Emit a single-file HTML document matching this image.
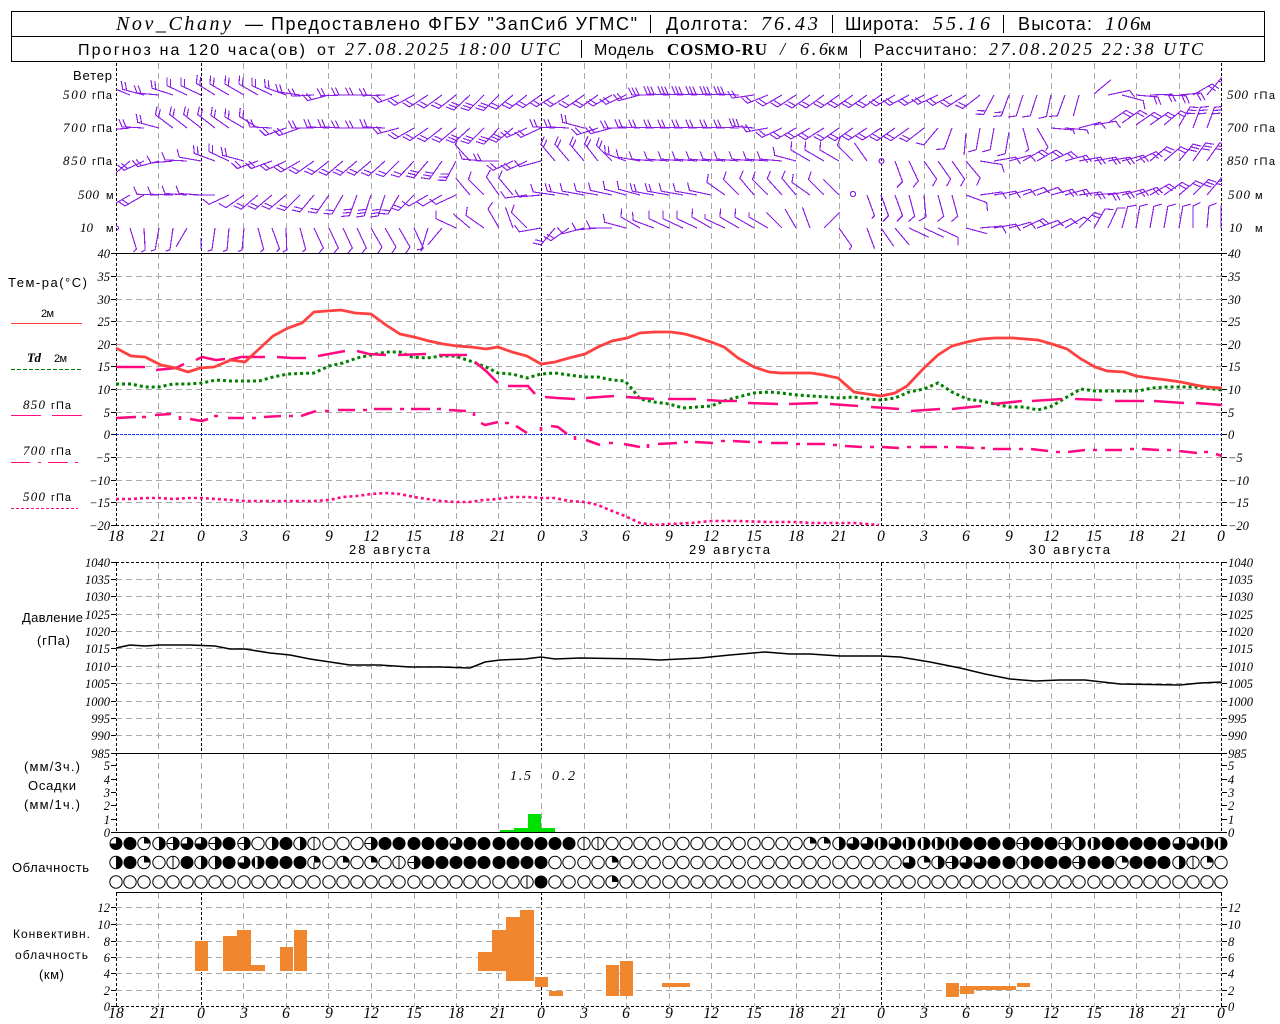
<!DOCTYPE html>
<html lang="ru"><head><meta charset="utf-8"><title>Nov_Chany</title>
<style>
html,body{margin:0;padding:0;background:#fff}
svg{display:block}
text{font-family:"Liberation Sans",sans-serif;font-size:13px;fill:#000}
.i{font-family:"Liberation Serif",serif;font-style:italic;font-size:13px}
.h{font-size:18px}.hi{font-family:"Liberation Serif",serif;font-style:italic;font-size:20px}
.s{font-size:16px}.si{font-family:"Liberation Serif",serif;font-style:italic;font-size:18px}
.tk{font-family:"Liberation Serif",serif;font-style:italic;font-size:12.5px}
.ax{font-family:"Liberation Serif",serif;font-style:italic;font-size:15.5px;text-anchor:middle}
.l{text-anchor:end}
.c{text-anchor:middle}
.g{fill:none;stroke:#a9a9a9;stroke-dasharray:6 4;shape-rendering:crispEdges}
.k{fill:none;stroke:#000;stroke-dasharray:3 2;shape-rendering:crispEdges}
.w{fill:none;stroke:#8a1ee6;stroke-width:1.15;shape-rendering:crispEdges}
.crisp{shape-rendering:crispEdges}
</style></head><body>
<svg xmlns="http://www.w3.org/2000/svg" width="1280" height="1024" viewBox="0 0 1280 1024">
<defs>
<clipPath id="vc"><rect x="0" y="63" width="1280" height="462"/><rect x="0" y="562" width="1280" height="270"/><rect x="0" y="892" width="1280" height="114"/></clipPath>
<clipPath id="wc"><rect x="116" y="63" width="1106" height="190"/></clipPath>
<clipPath id="tc"><rect x="116" y="254" width="1106" height="272"/></clipPath>
<path id="a" d="M0 0H-22"/>
<path id="e" d="M0 0H-22l-2-4"/>
<path id="b" d="M0 0H-22l-3.6-7.5"/>
<path id="c" d="M0 0H-22l-3.6-7.5M-18 0l-3.6-7.5"/>
<path id="d" d="M0 0H-22l-3.6-7.5M-18.5 0l-3.6-7.5M-15 0l-3.6-7.5"/>
<circle id="k0" r="6.2" fill="#fff" stroke="#000"/>
<g id="k1"><circle r="6.2" fill="#fff" stroke="#000"/><path d="M0-6V6" stroke="#000"/></g>
<g id="k2"><circle r="6.2" fill="#fff" stroke="#000"/><path d="M0 0V-6.5A6.5 6.5 0 0 1 6.5 0Z"/></g>
<g id="k3"><circle r="6.2" fill="#fff" stroke="#000"/><path d="M0 0V-6.5A6.5 6.5 0 0 1 6.5 0Z"/><path d="M0 0V6" stroke="#000"/></g>
<g id="k4"><circle r="6.2" fill="#fff" stroke="#000"/><path d="M0-6.5A6.5 6.5 0 0 1 0 6.5Z"/></g>
<g id="k5"><circle r="6.2" fill="#fff" stroke="#000"/><path d="M0-6.5A6.5 6.5 0 0 1 0 6.5Z"/><path d="M-6 0H0" stroke="#000"/></g>
<g id="k6"><circle r="6.5"/><path d="M0 0V-5.5A5.5 5.5 0 0 0-5.5 0Z" fill="#fff"/></g>
<g id="k7"><circle r="6.5"/><rect x="-3" y="-5.4" width="2.6" height="10.8" fill="#fff"/></g>
<circle id="k8" r="6.5"/>
</defs>
<!-- header -->
<rect class="crisp" x="11.5" y="11.5" width="1253" height="50" fill="none" stroke="#000"/>
<path class="crisp" d="M11 36.5H1265M650.5 15V33M832.5 15V33M1003.5 15V33M581.5 40V58M860.5 40V58" stroke="#000"/>
<text class="hi" x="116" y="30" textLength="115">Nov_Chany</text>
<text class="h" x="245" y="30" textLength="13">—</text>
<text class="h" x="271" y="30" textLength="366">Предоставлено ФГБУ "ЗапСиб УГМС"</text>
<text class="h" x="666" y="30" textLength="82">Долгота:</text>
<text class="hi" x="761" y="30" textLength="57">76.43</text>
<text class="h" x="845" y="30" textLength="74">Широта:</text>
<text class="hi" x="933" y="30" textLength="57">55.16</text>
<text class="h" x="1018" y="30" textLength="74">Высота:</text>
<text class="hi" x="1105" y="30" textLength="35">106</text>
<text class="s" x="1140" y="30" textLength="12">м</text>
<text class="s" x="78" y="55" textLength="227">Прогноз на 120 часа(ов)</text>
<text class="s" x="317" y="55" textLength="18">от</text>
<text class="si" x="345" y="55" textLength="215">27.08.2025 18:00 UTC</text>
<text class="s" x="594" y="55" textLength="60">Модель</text>
<text x="667" y="55" textLength="100" style="font-family:'Liberation Serif',serif;font-weight:bold;font-size:17px">COSMO-RU</text>
<text class="si" x="780" y="55" textLength="8">/</text>
<text class="si" x="800" y="55" textLength="28">6.6</text>
<text class="s" x="828" y="55" textLength="20">км</text>
<text class="s" x="874" y="55" textLength="103">Рассчитано:</text>
<text class="si" x="989" y="55" textLength="214">27.08.2025 22:38 UTC</text>
<!-- grids -->
<g clip-path="url(#vc)">
<path class="g" d="M158.5 63V1006M243.5 63V1006M286.5 63V1006M328.5 63V1006M371.5 63V1006M414.5 63V1006M456.5 63V1006M498.5 63V1006M584.5 63V1006M626.5 63V1006M669.5 63V1006M711.5 63V1006M754.5 63V1006M796.5 63V1006M839.5 63V1006M924.5 63V1006M966.5 63V1006M1009.5 63V1006M1051.5 63V1006M1094.5 63V1006M1136.5 63V1006M1179.5 63V1006"/>
<path class="g" d="M201.5 753V832M541.5 753V832M881.5 753V832"/>
<path class="k" d="M116.5 63V1006M1221.5 63V1006M201.5 63V753M541.5 63V753M881.5 63V753M201.5 892V1006M541.5 892V1006M881.5 892V1006"/>
</g>
<path class="g" d="M116 276.5H1222M116 299.5H1222M116 321.5H1222M116 344.5H1222M116 366.5H1222M116 389.5H1222M116 412.5H1222M116 457.5H1222M116 480.5H1222M116 502.5H1222M116 579.5H1222M116 596.5H1222M116 614.5H1222M116 631.5H1222M116 648.5H1222M116 666.5H1222M116 683.5H1222M116 701.5H1222M116 718.5H1222M116 735.5H1222M116 907.5H1222M116 924.5H1222M116 941.5H1222M116 957.5H1222M116 973.5H1222M116 990.5H1222"/>
<path class="crisp" d="M111 253.5H1227M111 753.5H1227M116 832.5H1222M116 892.5H1222" stroke="#000" fill="none"/>
<path class="k" d="M116 525.5H1222M116 562.5H1222M116 1006.5H1222"/>
<path class="crisp" stroke="#000" d="M111 276.5h5M111 299.5h5M111 321.5h5M111 344.5h5M111 366.5h5M111 389.5h5M111 412.5h5M111 434.5h5M111 457.5h5M111 480.5h5M111 502.5h5M111 525.5h5M111 562.5h5M111 579.5h5M111 596.5h5M111 614.5h5M111 631.5h5M111 648.5h5M111 666.5h5M111 683.5h5M111 701.5h5M111 718.5h5M111 735.5h5M111 765.5h5M111 779.5h5M111 792.5h5M111 805.5h5M111 819.5h5M111 832.5h5M111 907.5h5M111 924.5h5M111 941.5h5M111 957.5h5M111 973.5h5M111 990.5h5M111 1006.5h5M1222 276.5h5M1222 299.5h5M1222 321.5h5M1222 344.5h5M1222 366.5h5M1222 389.5h5M1222 412.5h5M1222 434.5h5M1222 457.5h5M1222 480.5h5M1222 502.5h5M1222 525.5h5M1222 562.5h5M1222 579.5h5M1222 596.5h5M1222 614.5h5M1222 631.5h5M1222 648.5h5M1222 666.5h5M1222 683.5h5M1222 701.5h5M1222 718.5h5M1222 735.5h5M1222 765.5h5M1222 779.5h5M1222 792.5h5M1222 805.5h5M1222 819.5h5M1222 832.5h5M1222 907.5h5M1222 924.5h5M1222 941.5h5M1222 957.5h5M1222 973.5h5M1222 990.5h5M1222 1006.5h5"/>
<!-- wind -->
<g class="w" clip-path="url(#wc)">
<g transform="translate(0 95)">
<use href="#c" transform="translate(130)rotate(22)"/><use href="#c" transform="translate(144)rotate(15)"/><use href="#c" transform="translate(159)rotate(5)"/><use href="#c" transform="translate(173)rotate(18)"/><use href="#c" transform="translate(187)rotate(25)"/><use href="#c" transform="translate(201)rotate(25)"/><use href="#c" transform="translate(215)rotate(32)"/><use href="#c" transform="translate(229)rotate(30)"/><use href="#c" transform="translate(244)rotate(30)"/><use href="#c" transform="translate(258)rotate(30)"/><use href="#c" transform="translate(272)rotate(25)"/><use href="#c" transform="translate(286)rotate(20)"/><use href="#c" transform="translate(300)rotate(8)"/><use href="#c" transform="translate(314)rotate(-3)"/><use href="#c" transform="translate(329)rotate(-15)"/><use href="#c" transform="translate(343)rotate(-2)"/><use href="#c" transform="translate(357)"/><use href="#c" transform="translate(371)"/><use href="#c" transform="translate(385)rotate(-2)"/><use href="#c" transform="translate(399)rotate(-20)"/><use href="#c" transform="translate(414)rotate(-28)"/><use href="#c" transform="translate(428)rotate(-33)"/><use href="#c" transform="translate(442)rotate(-36)"/><use href="#c" transform="translate(456)rotate(-38)"/><use href="#d" transform="translate(470)rotate(-43)"/><use href="#d" transform="translate(484)rotate(-45)"/><use href="#d" transform="translate(499)rotate(-45)"/><use href="#c" transform="translate(513)rotate(-40)"/><use href="#c" transform="translate(527)rotate(-38)"/><use href="#c" transform="translate(541)rotate(-35)"/><use href="#c" transform="translate(555)rotate(-32)"/><use href="#c" transform="translate(569)rotate(-32)"/><use href="#c" transform="translate(584)rotate(-35)"/><use href="#c" transform="translate(598)rotate(-35)"/><use href="#c" transform="translate(612)rotate(-30)"/><use href="#c" transform="translate(626)rotate(-25)"/><use href="#c" transform="translate(640)rotate(-15)"/><use href="#d" transform="translate(654)"/><use href="#d" transform="translate(669)rotate(3)"/><use href="#d" transform="translate(683)rotate(3)"/><use href="#d" transform="translate(697)rotate(3)"/><use href="#d" transform="translate(711)rotate(3)"/><use href="#d" transform="translate(725)rotate(3)"/><use href="#d" transform="translate(739)rotate(3)"/><use href="#c" transform="translate(754)rotate(-8)"/><use href="#c" transform="translate(768)rotate(-22)"/><use href="#c" transform="translate(782)rotate(-30)"/><use href="#c" transform="translate(796)rotate(-33)"/><use href="#c" transform="translate(810)rotate(-36)"/><use href="#c" transform="translate(824)rotate(-36)"/><use href="#c" transform="translate(839)rotate(-35)"/><use href="#c" transform="translate(853)rotate(-35)"/><use href="#c" transform="translate(867)rotate(-35)"/><use href="#c" transform="translate(881)rotate(-35)"/><use href="#c" transform="translate(895)rotate(-30)"/><use href="#c" transform="translate(909)rotate(-28)"/><use href="#c" transform="translate(924)rotate(-28)"/><use href="#c" transform="translate(938)rotate(-25)"/><use href="#c" transform="translate(952)rotate(-28)"/><use href="#c" transform="translate(966)rotate(-32)"/><use href="#c" transform="translate(980)rotate(-38)"/><use href="#c" transform="translate(994)rotate(-62)"/><use href="#c" transform="translate(1009)rotate(-70)"/><use href="#b" transform="translate(1023)rotate(-72)"/><use href="#b" transform="translate(1037)rotate(-72)"/><use href="#b" transform="translate(1051)rotate(-78)"/><use href="#b" transform="translate(1065)rotate(-70)"/><use href="#a" transform="translate(1079)rotate(-75)"/><use href="#a" transform="translate(1094 -1)rotate(140)"/><use href="#b" transform="translate(1108)rotate(168)"/><use href="#b" transform="translate(1122)rotate(-165)"/><use href="#c" transform="translate(1136)rotate(-175)"/><use href="#c" transform="translate(1150)rotate(178)"/><use href="#c" transform="translate(1164)rotate(-178)"/><use href="#c" transform="translate(1179)rotate(175)"/><use href="#c" transform="translate(1193)rotate(150)"/><use href="#c" transform="translate(1207)rotate(130)"/>
</g>
<g transform="translate(0 128)">
<use href="#a" transform="translate(130)rotate(-5)"/><use href="#c" transform="translate(144)rotate(3)"/><use href="#c" transform="translate(159)rotate(15)"/><use href="#c" transform="translate(173)rotate(37)"/><use href="#c" transform="translate(187)rotate(38)"/><use href="#c" transform="translate(201)rotate(38)"/><use href="#c" transform="translate(215)rotate(38)"/><use href="#c" transform="translate(229)rotate(35)"/><use href="#c" transform="translate(244)rotate(30)"/><use href="#c" transform="translate(258)rotate(32)"/><use href="#c" transform="translate(272)rotate(3)"/><use href="#c" transform="translate(286)rotate(-20)"/><use href="#c" transform="translate(300)rotate(-20)"/><use href="#c" transform="translate(314)"/><use href="#c" transform="translate(329)rotate(3)"/><use href="#c" transform="translate(343)rotate(3)"/><use href="#c" transform="translate(357)"/><use href="#c" transform="translate(371)"/><use href="#c" transform="translate(385)rotate(3)"/><use href="#c" transform="translate(399)rotate(-15)"/><use href="#c" transform="translate(414)rotate(-30)"/><use href="#c" transform="translate(428)rotate(-35)"/><use href="#c" transform="translate(442)rotate(-38)"/><use href="#c" transform="translate(456)rotate(-40)"/><use href="#d" transform="translate(470)rotate(-42)"/><use href="#d" transform="translate(484)rotate(-45)"/><use href="#d" transform="translate(499)rotate(-47)"/><use href="#d" transform="translate(513)rotate(-40)"/><use href="#c" transform="translate(527)rotate(-25)"/><use href="#c" transform="translate(541)rotate(-25)"/><use href="#c" transform="translate(555)rotate(3)"/><use href="#c" transform="translate(569)rotate(3)"/><use href="#c" transform="translate(584)rotate(15)"/><use href="#c" transform="translate(598)rotate(-18)"/><use href="#c" transform="translate(612)rotate(-15)"/><use href="#c" transform="translate(626)"/><use href="#c" transform="translate(640)rotate(3)"/><use href="#c" transform="translate(654)rotate(2)"/><use href="#c" transform="translate(669)rotate(2)"/><use href="#c" transform="translate(683)rotate(2)"/><use href="#c" transform="translate(697)rotate(2)"/><use href="#c" transform="translate(711)rotate(2)"/><use href="#c" transform="translate(725)rotate(2)"/><use href="#c" transform="translate(739)rotate(2)"/><use href="#d" transform="translate(754)rotate(5)"/><use href="#c" transform="translate(768)rotate(-10)"/><use href="#c" transform="translate(782)rotate(-25)"/><use href="#c" transform="translate(796)rotate(-30)"/><use href="#c" transform="translate(810)rotate(-30)"/><use href="#c" transform="translate(824)rotate(-32)"/><use href="#c" transform="translate(839)rotate(-35)"/><use href="#c" transform="translate(853)rotate(-35)"/><use href="#c" transform="translate(867)rotate(-33)"/><use href="#c" transform="translate(881)rotate(-33)"/><use href="#c" transform="translate(895)rotate(-35)"/><use href="#c" transform="translate(909)rotate(-35)"/><use href="#c" transform="translate(924)rotate(-38)"/><use href="#b" transform="translate(938)rotate(-50)"/><use href="#b" transform="translate(952)rotate(-70)"/><use href="#a" transform="translate(966 5)rotate(-85)"/><use href="#b" transform="translate(980)rotate(-80)"/><use href="#b" transform="translate(994)rotate(-80)"/><use href="#b" transform="translate(1009 4)rotate(-80)"/><use href="#e" transform="translate(1023)rotate(-105)"/><use href="#e" transform="translate(1037)rotate(-120)"/><use href="#e" transform="translate(1051)rotate(-175)"/><use href="#e" transform="translate(1065)rotate(-175)"/><use href="#b" transform="translate(1079)rotate(165)"/><use href="#b" transform="translate(1094 -3)rotate(170)"/><use href="#c" transform="translate(1108 -5)rotate(145)"/><use href="#c" transform="translate(1122 -5)rotate(145)"/><use href="#c" transform="translate(1136 -3)rotate(145)"/><use href="#c" transform="translate(1150 -3)rotate(145)"/><use href="#c" transform="translate(1164 -3)rotate(140)"/><use href="#d" transform="translate(1179 -2)rotate(120)"/><use href="#d" transform="translate(1193)rotate(110)"/><use href="#d" transform="translate(1207)rotate(110)"/>
</g>
<g transform="translate(0 161)">
<use href="#c" transform="translate(130)rotate(-40)"/><use href="#c" transform="translate(144)rotate(-25)"/><use href="#c" transform="translate(159)rotate(-15)"/><use href="#b" transform="translate(173)rotate(-5)"/><use href="#b" transform="translate(187)rotate(3)"/><use href="#b" transform="translate(201)rotate(10)"/><use href="#c" transform="translate(215)rotate(20)"/><use href="#c" transform="translate(229)rotate(25)"/><use href="#c" transform="translate(244)rotate(15)"/><use href="#c" transform="translate(258)rotate(-20)"/><use href="#c" transform="translate(272)rotate(-20)"/><use href="#c" transform="translate(286)rotate(-25)"/><use href="#c" transform="translate(300)rotate(-30)"/><use href="#c" transform="translate(314)rotate(-35)"/><use href="#c" transform="translate(329)rotate(-38)"/><use href="#c" transform="translate(343)rotate(-40)"/><use href="#c" transform="translate(357)rotate(-40)"/><use href="#c" transform="translate(371)rotate(-40)"/><use href="#c" transform="translate(385)rotate(-42)"/><use href="#c" transform="translate(399)rotate(-45)"/><use href="#c" transform="translate(414)rotate(-47)"/><use href="#d" transform="translate(428)rotate(-50)"/><use href="#d" transform="translate(442)rotate(-55)"/><use href="#d" transform="translate(456)rotate(-62)"/><use href="#b" transform="translate(470)rotate(48)"/><use href="#b" transform="translate(484)rotate(5)"/><use href="#c" transform="translate(499)"/><use href="#c" transform="translate(513)rotate(-25)"/><use href="#c" transform="translate(527)rotate(-25)"/><use href="#b" transform="translate(541)rotate(-15)"/><use href="#c" transform="translate(555)rotate(50)"/><use href="#c" transform="translate(569)rotate(50)"/><use href="#c" transform="translate(584)rotate(50)"/><use href="#c" transform="translate(598)rotate(52)"/><use href="#c" transform="translate(612)rotate(45)"/><use href="#c" transform="translate(626)rotate(20)"/><use href="#b" transform="translate(640)rotate(10)"/><use href="#b" transform="translate(654)rotate(5)"/><use href="#b" transform="translate(669)rotate(5)"/><use href="#b" transform="translate(683)rotate(5)"/><use href="#b" transform="translate(697)rotate(5)"/><use href="#b" transform="translate(711)rotate(5)"/><use href="#b" transform="translate(725)rotate(5)"/><use href="#b" transform="translate(739)rotate(5)"/><use href="#b" transform="translate(754)rotate(5)"/><use href="#b" transform="translate(768)rotate(5)"/><use href="#b" transform="translate(782)rotate(5)"/><use href="#b" transform="translate(796)rotate(15)"/><use href="#b" transform="translate(810)rotate(30)"/><use href="#b" transform="translate(824)rotate(30)"/><use href="#b" transform="translate(839)rotate(30)"/><use href="#b" transform="translate(853)rotate(45)"/><use href="#a" transform="translate(867)rotate(55)"/><circle cx="881.5" cy="0" r="2.4"/><use href="#b" transform="translate(895)rotate(-110)"/><use href="#b" transform="translate(909)rotate(-115)"/><use href="#b" transform="translate(924)rotate(-125)"/><use href="#b" transform="translate(938)rotate(-125)"/><use href="#b" transform="translate(952)rotate(-125)"/><use href="#b" transform="translate(966)rotate(-130)"/><use href="#b" transform="translate(980)rotate(-171)"/><use href="#b" transform="translate(994)rotate(170)"/><use href="#b" transform="translate(1009)rotate(165)"/><use href="#c" transform="translate(1023)rotate(150)"/><use href="#c" transform="translate(1037)rotate(150)"/><use href="#c" transform="translate(1051)rotate(155)"/><use href="#c" transform="translate(1065)rotate(165)"/><use href="#c" transform="translate(1079)rotate(170)"/><use href="#c" transform="translate(1094)rotate(170)"/><use href="#c" transform="translate(1108)rotate(170)"/><use href="#c" transform="translate(1122)rotate(165)"/><use href="#c" transform="translate(1136)rotate(155)"/><use href="#c" transform="translate(1150)rotate(140)"/><use href="#c" transform="translate(1164)rotate(140)"/><use href="#d" transform="translate(1179)rotate(130)"/><use href="#d" transform="translate(1193)rotate(125)"/><use href="#d" transform="translate(1207)rotate(125)"/>
</g>
<g transform="translate(0 195)">
<use href="#b" transform="translate(130)rotate(-30)"/><use href="#c" transform="translate(144)rotate(-30)"/><use href="#b" transform="translate(159)rotate(2)"/><use href="#b" transform="translate(173)rotate(2)"/><use href="#b" transform="translate(187)rotate(4)"/><use href="#b" transform="translate(201)rotate(4)"/><use href="#a" transform="translate(215)"/><use href="#b" transform="translate(229)rotate(-25)"/><use href="#b" transform="translate(244)rotate(-35)"/><use href="#c" transform="translate(258)rotate(-40)"/><use href="#c" transform="translate(272)rotate(-40)"/><use href="#c" transform="translate(286)rotate(-40)"/><use href="#c" transform="translate(300)rotate(-45)"/><use href="#c" transform="translate(314)rotate(-50)"/><use href="#c" transform="translate(329)rotate(-55)"/><use href="#c" transform="translate(343)rotate(-60)"/><use href="#d" transform="translate(357)rotate(-70)"/><use href="#d" transform="translate(371)rotate(-72)"/><use href="#d" transform="translate(385)rotate(-72)"/><use href="#c" transform="translate(399)rotate(-60)"/><use href="#c" transform="translate(414)rotate(-45)"/><use href="#b" transform="translate(428)rotate(-30)"/><use href="#b" transform="translate(442)rotate(-30)"/><use href="#b" transform="translate(456)rotate(-25)"/><use href="#a" transform="translate(470)rotate(50)"/><use href="#b" transform="translate(484)rotate(45)"/><use href="#b" transform="translate(499)rotate(55)"/><use href="#b" transform="translate(513)rotate(50)"/><use href="#b" transform="translate(527)rotate(-8)"/><use href="#b" transform="translate(541)rotate(-5)"/><use href="#b" transform="translate(555)rotate(8)"/><use href="#c" transform="translate(569)rotate(10)"/><use href="#b" transform="translate(584)rotate(10)"/><use href="#b" transform="translate(598)rotate(10)"/><use href="#b" transform="translate(612)rotate(12)"/><use href="#b" transform="translate(626)rotate(15)"/><use href="#b" transform="translate(640)rotate(15)"/><use href="#c" transform="translate(654)rotate(10)"/><use href="#c" transform="translate(669)rotate(10)"/><use href="#b" transform="translate(683)rotate(10)"/><use href="#b" transform="translate(697)rotate(10)"/><use href="#b" transform="translate(711)rotate(12)"/><use href="#b" transform="translate(725)rotate(35)"/><use href="#b" transform="translate(739)rotate(45)"/><use href="#b" transform="translate(754)rotate(50)"/><use href="#b" transform="translate(768)rotate(45)"/><use href="#b" transform="translate(782)rotate(48)"/><use href="#b" transform="translate(796)rotate(50)"/><use href="#b" transform="translate(810)rotate(35)"/><use href="#b" transform="translate(824)rotate(45)"/><use href="#a" transform="translate(839)rotate(45)"/><circle cx="853" cy="-1" r="2.6"/><use href="#e" transform="translate(867)rotate(-110)"/><use href="#b" transform="translate(881)rotate(-110)"/><use href="#b" transform="translate(895)rotate(-110)"/><use href="#b" transform="translate(909)rotate(-105)"/><use href="#b" transform="translate(924)rotate(-95)"/><use href="#b" transform="translate(938)rotate(-105)"/><use href="#b" transform="translate(952)rotate(-105)"/><use href="#b" transform="translate(966)rotate(-160)"/><use href="#b" transform="translate(980)rotate(172)"/><use href="#b" transform="translate(994)rotate(170)"/><use href="#b" transform="translate(1009)rotate(165)"/><use href="#b" transform="translate(1023)rotate(160)"/><use href="#b" transform="translate(1037)rotate(160)"/><use href="#c" transform="translate(1051)rotate(165)"/><use href="#c" transform="translate(1065)rotate(165)"/><use href="#c" transform="translate(1079)rotate(172)"/><use href="#c" transform="translate(1094)rotate(175)"/><use href="#c" transform="translate(1108)rotate(170)"/><use href="#c" transform="translate(1122)rotate(165)"/><use href="#c" transform="translate(1136)rotate(160)"/><use href="#c" transform="translate(1150)rotate(150)"/><use href="#c" transform="translate(1164)rotate(145)"/><use href="#c" transform="translate(1179)rotate(140)"/><use href="#d" transform="translate(1193)rotate(135)"/><use href="#d" transform="translate(1207)rotate(130)"/>
</g>
<g transform="translate(0 228)">
<circle cx="116.5" cy="0" r="2"/><use href="#e" transform="translate(130)rotate(-107)"/><use href="#e" transform="translate(144)rotate(-93)"/><use href="#e" transform="translate(159)rotate(-80)"/><use href="#e" transform="translate(173)rotate(-82)"/><use href="#a" transform="translate(187)rotate(-60)"/><path d="M201 10V21"/><use href="#e" transform="translate(215)rotate(-82)"/><use href="#e" transform="translate(229)rotate(-85)"/><use href="#e" transform="translate(244)rotate(-85)"/><use href="#e" transform="translate(258)rotate(-105)"/><use href="#e" transform="translate(272)rotate(-110)"/><use href="#e" transform="translate(286)rotate(-92)"/><use href="#e" transform="translate(300)rotate(-105)"/><use href="#b" transform="translate(314)rotate(-115)"/><use href="#b" transform="translate(329)rotate(-115)"/><use href="#b" transform="translate(343)rotate(-115)"/><use href="#b" transform="translate(357)rotate(-115)"/><use href="#b" transform="translate(371)rotate(-120)"/><use href="#b" transform="translate(385)rotate(-120)"/><use href="#b" transform="translate(399)rotate(-120)"/><use href="#e" transform="translate(414)rotate(-115)"/><use href="#e" transform="translate(428)rotate(-73)"/><use href="#a" transform="translate(442)rotate(-50)"/><use href="#b" transform="translate(456)rotate(25)"/><use href="#a" transform="translate(470)rotate(40)"/><use href="#b" transform="translate(484)rotate(35)"/><use href="#b" transform="translate(499)rotate(60)"/><use href="#a" transform="translate(513)rotate(70)"/><use href="#b" transform="translate(527)rotate(45)"/><use href="#b" transform="translate(541)rotate(-10)"/><use href="#c" transform="translate(555)rotate(-50)"/><use href="#c" transform="translate(569)rotate(-35)"/><use href="#b" transform="translate(584)rotate(-15)"/><use href="#b" transform="translate(598)rotate(-5)"/><use href="#b" transform="translate(612)"/><use href="#b" transform="translate(626)rotate(15)"/><use href="#b" transform="translate(640)rotate(30)"/><use href="#b" transform="translate(654)rotate(20)"/><use href="#b" transform="translate(669)rotate(25)"/><use href="#b" transform="translate(683)rotate(25)"/><use href="#b" transform="translate(697)rotate(25)"/><use href="#b" transform="translate(711)rotate(30)"/><use href="#e" transform="translate(725)rotate(25)"/><use href="#b" transform="translate(739)rotate(30)"/><use href="#b" transform="translate(754)rotate(30)"/><use href="#e" transform="translate(768)rotate(30)"/><use href="#a" transform="translate(782)rotate(45)"/><use href="#a" transform="translate(796)rotate(60)"/><use href="#a" transform="translate(810)rotate(70)"/><use href="#a" transform="translate(824)rotate(135)"/><use href="#e" transform="translate(839)rotate(-125)"/><use href="#a" transform="translate(867)rotate(-110)"/><use href="#a" transform="translate(881)rotate(-125)"/><use href="#a" transform="translate(895)rotate(-130)"/><use href="#a" transform="translate(909)rotate(-155)"/><use href="#a" transform="translate(924)rotate(-155)"/><use href="#b" transform="translate(938)rotate(-155)"/><use href="#a" transform="translate(966)rotate(-165)"/><use href="#b" transform="translate(980)rotate(175)"/><use href="#b" transform="translate(994)rotate(170)"/><use href="#b" transform="translate(1009)rotate(165)"/><use href="#c" transform="translate(1023)rotate(155)"/><use href="#b" transform="translate(1037)rotate(160)"/><use href="#b" transform="translate(1051)rotate(155)"/><use href="#b" transform="translate(1065)rotate(150)"/><use href="#c" transform="translate(1079)rotate(135)"/><use href="#b" transform="translate(1094)rotate(120)"/><use href="#b" transform="translate(1108)rotate(115)"/><use href="#b" transform="translate(1122)rotate(105)"/><use href="#b" transform="translate(1136)rotate(100)"/><use href="#b" transform="translate(1150)rotate(100)"/><use href="#b" transform="translate(1164)rotate(100)"/><use href="#b" transform="translate(1179)rotate(100)"/><use href="#b" transform="translate(1193)rotate(90)"/><use href="#b" transform="translate(1207)rotate(95)"/><use href="#b" transform="translate(1221)rotate(90)"/>
</g>
</g>
<!-- temperature curves -->
<path class="crisp" d="M116 434.5H1222" stroke="#2040ff" stroke-dasharray="3 1" fill="none"/>
<g clip-path="url(#tc)" fill="none">
<path stroke="#008000" stroke-width="3" stroke-dasharray="3 3" d="M116 384L131 384 145 387 159 387 173 384 188 384 202 383 216 380 231 381 245 381 259 381 273 377 288 374 314 373 329 366 343 363 357 358 371 355 386 352 400 352 412 357 427 358 441 356 455 356 473 362 486 367 498 373 512 374 527 378 541 374 555 373 569 375 585 377 598 377 612 380 625 381 633 390 640 399 654 402 669 404 683 408 697 407 711 406 724 401 738 397 754 393 769 392 781 393 797 395 811 396 828 397 840 398 854 397 867 399 881 400 895 398 909 392 924 389 938 383 952 392 967 399 981 401 995 404 1009 407 1024 407 1038 410 1052 406 1067 397 1081 389 1095 391 1109 391 1124 391 1138 391 1152 388 1167 387 1181 387 1195 387 1222 390"/>
<path stroke="#ff0a82" stroke-width="2.6" d="M116 367L145 367M156 370L176 368 184 364M196 360L202 357 216 360 225 359M229 360L241 357 265 357M277 357L292 358 306 358M318 356L345 351M357 351L369 354 386 355M398 355L426 354M439 355L467 355M475 362L486 371 498 383M508 386L528 386 535 394M545 397L557 398 575 399M586 398L614 396M626 397L654 399M668 399L696 399M707 400L722 401 737 401M748 403L778 404M789 404L818 403M830 404L858 406M871 407L899 409M911 411L940 409M952 409L981 406M993 404L1022 401M1032 401L1062 399M1075 399L1102 400M1115 401L1144 401M1154 401L1184 403M1196 403L1222 405"/>
<path stroke="#ff0a82" stroke-width="2.6" d="M116 418L136 417M142 417h4M155 415L171 414M180 416v4M190 419L202 421 208 419M214 416h4M228 418L244 418M252 418h4M264 417L281 416M289 416h4M301 416L316 411M325 411h4M338 410L355 410M363 410h4M374 409L392 409M400 409h4M411 409L430 409M437 409h4M449 410L466 411M474 412v4M481 423L485 425 498 422M505 423h4M516 426L527 433M541 427v4M551 426L558 427 567 434M575 436v4M586 440L600 445M609 443h4M624 444L640 447M648 444v4M658 444L677 443M684 442h4M695 442L713 443M721 441h4M733 441L750 442M758 442h4M771 443L788 443M796 444h4M807 444L825 444M833 445h4M845 446L862 447M870 447h4M882 447L899 448M907 447h4M920 447L937 447M944 447h4M956 447L974 448M981 448h4M993 449L1011 449M1019 449h4M1031 449L1048 451M1056 452h4M1068 452L1085 450M1093 450h4M1105 450L1122 450M1130 449h4M1142 449L1159 450M1167 450h4M1179 451L1197 453M1204 452h4M1216 454L1222 456"/>
<path stroke="#ff0a82" stroke-width="2.6" stroke-dasharray="3 3" d="M116 499L131 499 145 498 159 498 173 499 188 498 202 498 216 499 231 500 245 501 259 501 273 501 288 501 314 501 329 500 343 497 357 496 371 494 386 493 400 494 414 497 427 499 441 501 455 502 469 502 484 500 498 499 512 497 527 497 541 498 555 498 569 501 585 502 598 505 612 511 625 516 640 523 654 525 669 524 691 523 711 521 738 521 769 522 797 522 811 523 840 523 854 523 879 525"/>
<path stroke="#ff4040" stroke-width="2.8" d="M116 348L131 356 145 357 161 365 176 368 188 372 200 368 214 367 231 360 245 362 259 349 273 336 288 328 302 323 314 312 327 311 341 310 355 313 371 314 386 325 400 334 414 337 429 341 443 344 457 346 471 347 486 349 498 347 512 352 527 356 541 364 555 362 569 358 585 354 598 347 612 341 627 338 640 333 654 332 671 332 685 334 699 338 711 342 724 347 738 358 754 367 769 372 781 373 811 373 824 375 838 378 854 392 867 394 881 396 895 393 907 386 924 368 938 355 952 346 967 342 981 339 995 338 1013 338 1038 340 1052 344 1067 349 1081 359 1095 367 1107 371 1124 372 1136 376 1150 378 1167 380 1181 382 1195 385 1207 387 1222 388"/>
</g>
<!-- pressure -->
<path fill="none" stroke="#000" stroke-width="1.5" d="M116 648L130 645 145 646 160 645 190 645 215 646 230 649 245 649 270 653 290 655 310 659 330 662 350 665 380 665 410 667 440 667 470 668 485 662 500 660 525 659 541 657 555 659 580 658 640 659 660 660 700 658 730 655 765 652 790 654 810 654 840 656 880 656 900 657 930 662 960 668 985 674 1010 679 1035 681 1060 680 1085 680 1120 684 1180 685 1200 683 1222 682"/>
<!-- precip bars -->
<g fill="#00e000" class="crisp"><rect x="500" y="830" width="14" height="2"/><rect x="514" y="828" width="14" height="4"/><rect x="528" y="814" width="13" height="18"/><rect x="541" y="828" width="14" height="4"/></g>
<text class="i" x="510" y="780" textLength="21" style="font-size:14px">1.5</text>
<text class="i" x="552" y="780" textLength="23" style="font-size:14px">0.2</text>
<!-- cloud rows -->
<g transform="translate(0 843.5)">
<use href="#k6" x="116"/><use href="#k8" x="130"/><use href="#k2" x="144"/><use href="#k4" x="159"/><use href="#k5" x="173"/><use href="#k6" x="187"/><use href="#k6" x="201"/><use href="#k5" x="215"/><use href="#k8" x="229"/><use href="#k5" x="244"/><use href="#k0" x="258"/><use href="#k4" x="272"/><use href="#k8" x="286"/><use href="#k4" x="300"/><use href="#k1" x="314"/><use href="#k0" x="329"/><use href="#k0" x="343"/><use href="#k0" x="357"/><use href="#k5" x="371"/><use href="#k8" x="385"/><use href="#k8" x="399"/><use href="#k8" x="414"/><use href="#k8" x="428"/><use href="#k8" x="442"/><use href="#k6" x="456"/><use href="#k8" x="470"/><use href="#k8" x="484"/><use href="#k8" x="499"/><use href="#k8" x="513"/><use href="#k8" x="527"/><use href="#k8" x="541"/><use href="#k8" x="555"/><use href="#k8" x="569"/><use href="#k1" x="584"/><use href="#k1" x="598"/><use href="#k0" x="612"/><use href="#k0" x="626"/><use href="#k0" x="640"/><use href="#k0" x="654"/><use href="#k0" x="669"/><use href="#k0" x="683"/><use href="#k0" x="697"/><use href="#k0" x="711"/><use href="#k0" x="725"/><use href="#k0" x="739"/><use href="#k0" x="754"/><use href="#k0" x="768"/><use href="#k0" x="782"/><use href="#k0" x="796"/><use href="#k2" x="810"/><use href="#k2" x="824"/><use href="#k4" x="839"/><use href="#k6" x="853"/><use href="#k6" x="867"/><use href="#k7" x="881"/><use href="#k6" x="895"/><use href="#k7" x="909"/><use href="#k7" x="924"/><use href="#k7" x="938"/><use href="#k7" x="952"/><use href="#k8" x="966"/><use href="#k8" x="980"/><use href="#k8" x="994"/><use href="#k8" x="1009"/><use href="#k5" x="1023"/><use href="#k8" x="1037"/><use href="#k8" x="1051"/><use href="#k5" x="1065"/><use href="#k4" x="1079"/><use href="#k7" x="1094"/><use href="#k8" x="1108"/><use href="#k8" x="1122"/><use href="#k8" x="1136"/><use href="#k8" x="1150"/><use href="#k8" x="1164"/><use href="#k6" x="1179"/><use href="#k6" x="1193"/><use href="#k7" x="1207"/><use href="#k7" x="1221"/>
</g>
<g transform="translate(0 862.5)">
<use href="#k4" x="116"/><use href="#k8" x="130"/><use href="#k2" x="144"/><use href="#k0" x="159"/><use href="#k1" x="173"/><use href="#k8" x="187"/><use href="#k4" x="201"/><use href="#k4" x="215"/><use href="#k8" x="229"/><use href="#k6" x="244"/><use href="#k7" x="258"/><use href="#k8" x="272"/><use href="#k8" x="286"/><use href="#k8" x="300"/><use href="#k3" x="314"/><use href="#k0" x="329"/><use href="#k2" x="343"/><use href="#k0" x="357"/><use href="#k2" x="371"/><use href="#k0" x="385"/><use href="#k1" x="399"/><use href="#k5" x="414"/><use href="#k8" x="428"/><use href="#k8" x="442"/><use href="#k8" x="456"/><use href="#k8" x="470"/><use href="#k8" x="484"/><use href="#k8" x="499"/><use href="#k8" x="513"/><use href="#k8" x="527"/><use href="#k8" x="541"/><use href="#k0" x="555"/><use href="#k0" x="569"/><use href="#k0" x="584"/><use href="#k0" x="598"/><use href="#k2" x="612"/><use href="#k0" x="626"/><use href="#k0" x="640"/><use href="#k0" x="654"/><use href="#k0" x="669"/><use href="#k0" x="683"/><use href="#k0" x="697"/><use href="#k0" x="711"/><use href="#k0" x="725"/><use href="#k0" x="739"/><use href="#k0" x="754"/><use href="#k0" x="768"/><use href="#k0" x="782"/><use href="#k0" x="796"/><use href="#k0" x="810"/><use href="#k0" x="824"/><use href="#k0" x="839"/><use href="#k0" x="853"/><use href="#k0" x="867"/><use href="#k0" x="881"/><use href="#k0" x="895"/><use href="#k6" x="909"/><use href="#k2" x="924"/><use href="#k4" x="938"/><use href="#k5" x="952"/><use href="#k6" x="966"/><use href="#k6" x="980"/><use href="#k8" x="994"/><use href="#k8" x="1009"/><use href="#k4" x="1023"/><use href="#k8" x="1037"/><use href="#k8" x="1051"/><use href="#k8" x="1065"/><use href="#k5" x="1079"/><use href="#k8" x="1094"/><use href="#k8" x="1108"/><use href="#k2" x="1122"/><use href="#k8" x="1136"/><use href="#k8" x="1150"/><use href="#k8" x="1164"/><use href="#k4" x="1179"/><use href="#k1" x="1193"/><use href="#k2" x="1207"/><use href="#k0" x="1221"/>
</g>
<g transform="translate(0 882)">
<use href="#k0" x="116"/><use href="#k0" x="130"/><use href="#k0" x="144"/><use href="#k0" x="159"/><use href="#k0" x="173"/><use href="#k0" x="187"/><use href="#k0" x="201"/><use href="#k0" x="215"/><use href="#k0" x="229"/><use href="#k0" x="244"/><use href="#k0" x="258"/><use href="#k0" x="272"/><use href="#k0" x="286"/><use href="#k0" x="300"/><use href="#k0" x="314"/><use href="#k0" x="329"/><use href="#k0" x="343"/><use href="#k0" x="357"/><use href="#k0" x="371"/><use href="#k0" x="385"/><use href="#k0" x="399"/><use href="#k0" x="414"/><use href="#k0" x="428"/><use href="#k0" x="442"/><use href="#k0" x="456"/><use href="#k0" x="470"/><use href="#k0" x="484"/><use href="#k0" x="499"/><use href="#k0" x="513"/><use href="#k1" x="527"/><use href="#k8" x="541"/><use href="#k0" x="555"/><use href="#k0" x="569"/><use href="#k0" x="584"/><use href="#k0" x="598"/><use href="#k2" x="612"/><use href="#k0" x="626"/><use href="#k0" x="640"/><use href="#k0" x="654"/><use href="#k0" x="669"/><use href="#k0" x="683"/><use href="#k0" x="697"/><use href="#k0" x="711"/><use href="#k0" x="725"/><use href="#k0" x="739"/><use href="#k0" x="754"/><use href="#k0" x="768"/><use href="#k0" x="782"/><use href="#k0" x="796"/><use href="#k0" x="810"/><use href="#k0" x="824"/><use href="#k0" x="839"/><use href="#k0" x="853"/><use href="#k0" x="867"/><use href="#k0" x="881"/><use href="#k0" x="895"/><use href="#k0" x="909"/><use href="#k0" x="924"/><use href="#k0" x="938"/><use href="#k0" x="952"/><use href="#k0" x="966"/><use href="#k0" x="980"/><use href="#k0" x="994"/><use href="#k0" x="1009"/><use href="#k0" x="1023"/><use href="#k0" x="1037"/><use href="#k0" x="1051"/><use href="#k0" x="1065"/><use href="#k0" x="1079"/><use href="#k0" x="1094"/><use href="#k0" x="1108"/><use href="#k0" x="1122"/><use href="#k0" x="1136"/><use href="#k0" x="1150"/><use href="#k0" x="1164"/><use href="#k0" x="1179"/><use href="#k0" x="1193"/><use href="#k0" x="1207"/><use href="#k0" x="1221"/>
</g>
<!-- convective bars -->
<g fill="#f0862d" class="crisp">
<rect x="195" y="941" width="13" height="30"/><rect x="223" y="936" width="14" height="35"/><rect x="237" y="930" width="14" height="41"/><rect x="251" y="965" width="14" height="6"/><rect x="280" y="947" width="13" height="24"/><rect x="294" y="930" width="13" height="41"/><rect x="478" y="952" width="14" height="19"/><rect x="492" y="930" width="14" height="41"/><rect x="506" y="917" width="14" height="64"/><rect x="520" y="910" width="14" height="71"/><rect x="535" y="977" width="13" height="10"/><rect x="549" y="991" width="14" height="5"/><rect x="606" y="965" width="13" height="31"/><rect x="620" y="961" width="13" height="35"/><rect x="662" y="983" width="28" height="4"/><rect x="946" y="983" width="13" height="14"/><rect x="960" y="986" width="14" height="8"/><rect x="974" y="986" width="42" height="4"/><rect x="1017" y="983" width="13" height="4"/>
</g>
<!-- left wind labels -->
<text x="73" y="80" textLength="39">Ветер</text>
<text class="i" x="63" y="99" textLength="23">500</text><text x="92" y="99" textLength="20" style="font-size:11px">гПа</text>
<text class="i" x="63" y="132" textLength="23">700</text><text x="92" y="132" textLength="20" style="font-size:11px">гПа</text>
<text class="i" x="63" y="165" textLength="23">850</text><text x="92" y="165" textLength="20" style="font-size:11px">гПа</text>
<text class="i" x="78" y="199" textLength="21">500</text><text x="106" y="199" textLength="7" style="font-size:11px">м</text>
<text class="i" x="80" y="232" textLength="13">10</text><text x="106" y="232" textLength="7" style="font-size:11px">м</text>
<text class="i" x="1227" y="99" textLength="21">500</text><text x="1254" y="99" textLength="21" style="font-size:11px">гПа</text>
<text class="i" x="1227" y="132" textLength="21">700</text><text x="1254" y="132" textLength="21" style="font-size:11px">гПа</text>
<text class="i" x="1227" y="165" textLength="21">850</text><text x="1254" y="165" textLength="21" style="font-size:11px">гПа</text>
<text class="i" x="1228" y="199" textLength="22">500</text><text x="1255" y="199" textLength="7" style="font-size:11px">м</text>
<text class="i" x="1229" y="232" textLength="13">10</text><text x="1255" y="232" textLength="7" style="font-size:11px">м</text>
<!-- legend -->
<text x="8" y="287" textLength="79">Тем-ра(°C)</text>
<text x="41" y="317" textLength="13" style="font-size:11px">2м</text>
<path class="crisp" stroke="#ff4040" d="M11 323.5H82"/>
<text class="i" x="27" y="362" textLength="14" style="font-weight:bold">Td</text><text x="54" y="362" textLength="13" style="font-size:11px">2м</text>
<path class="crisp" stroke="#008000" stroke-dasharray="4 2" d="M11 369.5H82"/>
<text class="i" x="23" y="409" textLength="22">850</text><text x="51" y="409" textLength="20" style="font-size:11px">гПа</text>
<path class="crisp" stroke="#ff0a82" d="M11 415.5H41M52 415.5H82"/>
<text class="i" x="23" y="455" textLength="22">700</text><text x="51" y="455" textLength="20" style="font-size:11px">гПа</text>
<path class="crisp" stroke="#ff0a82" d="M11 462.5H30M38 462.5h3M48 462.5H68M75 462.5h3"/>
<text class="i" x="23" y="501" textLength="22">500</text><text x="51" y="501" textLength="20" style="font-size:11px">гПа</text>
<path class="crisp" stroke="#ff0a82" stroke-dasharray="3 2" d="M11 508.5H78"/>
<text x="22" y="622" textLength="61">Давление</text>
<text x="37" y="645" textLength="33">(гПа)</text>
<text x="24" y="771" textLength="56">(мм/3ч.)</text>
<text x="28" y="790" textLength="48">Осадки</text>
<text x="24" y="809" textLength="56">(мм/1ч.)</text>
<text x="12" y="872" textLength="77">Облачность</text>
<text x="13" y="938" textLength="77" style="font-size:12px">Конвективн.</text>
<text x="15" y="959" textLength="73" style="font-size:12px">облачность</text>
<text x="39" y="979" textLength="25">(км)</text>
<!-- temp ticks left -->
<g class="tk l">
<text class="tk l" x="110" y="258">40</text><text class="tk l" x="110" y="281">35</text><text class="tk l" x="110" y="304">30</text><text class="tk l" x="110" y="326">25</text><text class="tk l" x="110" y="349">20</text><text class="tk l" x="110" y="371">15</text><text class="tk l" x="110" y="394">10</text><text class="tk l" x="110" y="417">5</text><text class="tk l" x="110" y="439">0</text><text class="tk l" x="110" y="462">−5</text><text class="tk l" x="110" y="485">−10</text><text class="tk l" x="110" y="507">−15</text><text class="tk l" x="110" y="530">−20</text>
<text class="tk l" x="110" y="567">1040</text><text class="tk l" x="110" y="584">1035</text><text class="tk l" x="110" y="601">1030</text><text class="tk l" x="110" y="619">1025</text><text class="tk l" x="110" y="636">1020</text><text class="tk l" x="110" y="653">1015</text><text class="tk l" x="110" y="671">1010</text><text class="tk l" x="110" y="688">1005</text><text class="tk l" x="110" y="706">1000</text><text class="tk l" x="110" y="723">995</text><text class="tk l" x="110" y="740">990</text><text class="tk l" x="110" y="758">985</text>
<text class="tk l" x="110" y="770">5</text><text class="tk l" x="110" y="784">4</text><text class="tk l" x="110" y="797">3</text><text class="tk l" x="110" y="810">2</text><text class="tk l" x="110" y="824">1</text><text class="tk l" x="110" y="837">0</text>
<text class="tk l" x="110" y="912">12</text><text class="tk l" x="110" y="929">10</text><text class="tk l" x="110" y="946">8</text><text class="tk l" x="110" y="962">6</text><text class="tk l" x="110" y="978">4</text><text class="tk l" x="110" y="995">2</text><text class="tk l" x="110" y="1011">0</text>
</g>
<g>
<text class="tk" x="1228" y="258">40</text><text class="tk" x="1228" y="281">35</text><text class="tk" x="1228" y="304">30</text><text class="tk" x="1228" y="326">25</text><text class="tk" x="1228" y="349">20</text><text class="tk" x="1228" y="371">15</text><text class="tk" x="1228" y="394">10</text><text class="tk" x="1228" y="417">5</text><text class="tk" x="1228" y="439">0</text><text class="tk" x="1228" y="462">−5</text><text class="tk" x="1228" y="485">−10</text><text class="tk" x="1228" y="507">−15</text><text class="tk" x="1228" y="530">−20</text>
<text class="tk" x="1228" y="567">1040</text><text class="tk" x="1228" y="584">1035</text><text class="tk" x="1228" y="601">1030</text><text class="tk" x="1228" y="619">1025</text><text class="tk" x="1228" y="636">1020</text><text class="tk" x="1228" y="653">1015</text><text class="tk" x="1228" y="671">1010</text><text class="tk" x="1228" y="688">1005</text><text class="tk" x="1228" y="706">1000</text><text class="tk" x="1228" y="723">995</text><text class="tk" x="1228" y="740">990</text><text class="tk" x="1228" y="758">985</text>
<text class="tk" x="1228" y="770">5</text><text class="tk" x="1228" y="784">4</text><text class="tk" x="1228" y="797">3</text><text class="tk" x="1228" y="810">2</text><text class="tk" x="1228" y="824">1</text><text class="tk" x="1228" y="837">0</text>
<text class="tk" x="1228" y="912">12</text><text class="tk" x="1228" y="929">10</text><text class="tk" x="1228" y="946">8</text><text class="tk" x="1228" y="962">6</text><text class="tk" x="1228" y="978">4</text><text class="tk" x="1228" y="995">2</text><text class="tk" x="1228" y="1011">0</text>
</g>
<!-- time axis upper -->
<g>
<text class="ax" x="116" y="541">18</text><text class="ax" x="158" y="541">21</text><text class="ax" x="201" y="541">0</text><text class="ax" x="244" y="541">3</text><text class="ax" x="286" y="541">6</text><text class="ax" x="329" y="541">9</text><text class="ax" x="371" y="541">12</text><text class="ax" x="414" y="541">15</text><text class="ax" x="456" y="541">18</text><text class="ax" x="498" y="541">21</text><text class="ax" x="541" y="541">0</text><text class="ax" x="584" y="541">3</text><text class="ax" x="626" y="541">6</text><text class="ax" x="669" y="541">9</text><text class="ax" x="711" y="541">12</text><text class="ax" x="754" y="541">15</text><text class="ax" x="796" y="541">18</text><text class="ax" x="839" y="541">21</text><text class="ax" x="881" y="541">0</text><text class="ax" x="924" y="541">3</text><text class="ax" x="966" y="541">6</text><text class="ax" x="1009" y="541">9</text><text class="ax" x="1051" y="541">12</text><text class="ax" x="1094" y="541">15</text><text class="ax" x="1136" y="541">18</text><text class="ax" x="1179" y="541">21</text><text class="ax" x="1221" y="541">0</text>
<text x="349" y="554" textLength="81">28 августа</text><text x="689" y="554" textLength="81">29 августа</text><text x="1029" y="554" textLength="81">30 августа</text>
<text class="ax" x="116" y="1018">18</text><text class="ax" x="158" y="1018">21</text><text class="ax" x="201" y="1018">0</text><text class="ax" x="244" y="1018">3</text><text class="ax" x="286" y="1018">6</text><text class="ax" x="329" y="1018">9</text><text class="ax" x="371" y="1018">12</text><text class="ax" x="414" y="1018">15</text><text class="ax" x="456" y="1018">18</text><text class="ax" x="498" y="1018">21</text><text class="ax" x="541" y="1018">0</text><text class="ax" x="584" y="1018">3</text><text class="ax" x="626" y="1018">6</text><text class="ax" x="669" y="1018">9</text><text class="ax" x="711" y="1018">12</text><text class="ax" x="754" y="1018">15</text><text class="ax" x="796" y="1018">18</text><text class="ax" x="839" y="1018">21</text><text class="ax" x="881" y="1018">0</text><text class="ax" x="924" y="1018">3</text><text class="ax" x="966" y="1018">6</text><text class="ax" x="1009" y="1018">9</text><text class="ax" x="1051" y="1018">12</text><text class="ax" x="1094" y="1018">15</text><text class="ax" x="1136" y="1018">18</text><text class="ax" x="1179" y="1018">21</text><text class="ax" x="1221" y="1018">0</text>
</g>
</svg>
</body></html>
